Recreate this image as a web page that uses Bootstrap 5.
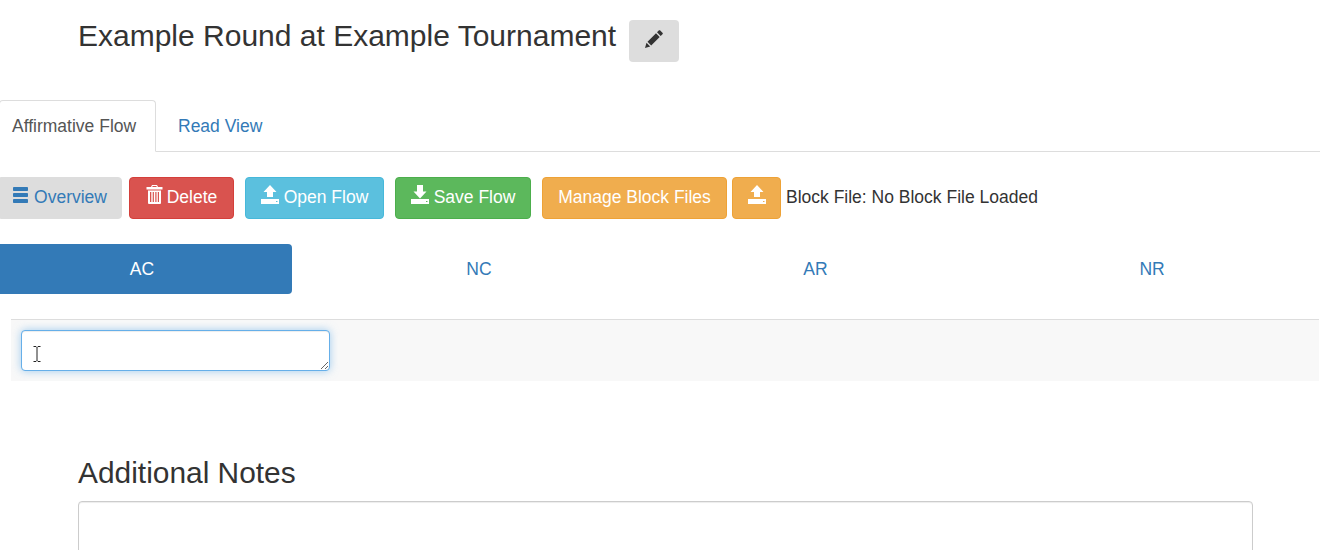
<!DOCTYPE html>
<html lang="en">
<head>
<meta charset="utf-8">
<title>Example Round at Example Tournament</title>
<link rel="stylesheet" href="https://cdn.jsdelivr.net/npm/bootstrap@5.3.0/dist/css/bootstrap.min.css">
<style>
html,body{height:550px;overflow:hidden}
body{font-family:"Liberation Sans",Arial,sans-serif;font-size:17.5px;color:#333;background:#fff;line-height:1.43}
.fl-head{padding:20px 0 0 78px;gap:13px;height:100px;align-items:flex-start}
.fl-title{font-size:30px;line-height:32px;margin:0;font-weight:400;color:#333}
.fl-edit{width:50px;height:42px;background:#ddd;border:0;border-radius:4px;padding:0 0 4px;display:flex;align-items:center;justify-content:center}
.fl-edit:hover{background:#ddd}
.fl-tabs{height:52px;border-bottom:1px solid #ddd;flex-wrap:nowrap}
.fl-tabs .nav-link{height:52px;width:auto;padding:0 20px 0 12px;line-height:50px;color:#337ab7;font-size:17.5px;border-radius:4px 4px 0 0;margin:0;border:1px solid transparent;white-space:nowrap}
.fl-tabs .first-tab{width:157px;margin-left:-1px;color:#555;background:#fff;border-color:#ddd #ddd #fff;padding-left:12px}
.fl-tabs .second-tab{padding-left:21px}
.fl-tools{padding-top:25px;height:92px;gap:11px;align-items:flex-start;white-space:nowrap}
.fl-btn{height:42px;font-size:17.5px;line-height:20px;padding:0 0 2px;border-radius:4px;color:#fff;display:flex;align-items:center;justify-content:center;gap:5px;border:1px solid transparent}
.fl-btn:hover{color:#fff}
.fl-btn svg{margin-bottom:5px}
.b-over{width:122px;margin-right:-4px;background:#ddd;border-color:#ddd;color:#337ab7;border-radius:0 4px 4px 0;padding-right:2px}
.b-over:hover{background:#ddd;color:#337ab7}
.b-over svg{margin-bottom:4px}
.b-del{width:105px;background:#d9534f;border-color:#d43f3a;gap:4px}
.b-del:hover{background:#d9534f}
.b-open{width:139px;background:#5bc0de;border-color:#46b8da}
.b-open:hover{background:#5bc0de}
.b-save{width:136px;background:#5cb85c;border-color:#4cae4c}
.b-save:hover{background:#5cb85c}
.b-man{width:185px;background:#f0ad4e;border-color:#eea236}
.b-man:hover{background:#f0ad4e}
.b-up{width:49px;background:#f0ad4e;border-color:#eea236;margin-left:-6px;margin-right:-6px}
.b-up:hover{background:#f0ad4e}
.fl-blocktext{line-height:40px;color:#333}
.fl-pills{display:grid;grid-template-columns:repeat(4,336.6px);margin-left:-26px;width:1346.4px;height:75px;align-items:start;flex-wrap:nowrap}
.fl-pills .nav-link{height:50px;line-height:50px;padding:0;text-align:center;color:#337ab7;font-size:17.5px;border-radius:4px}
.fl-pills .nav-link.active{margin:0 18.6px 0 18px;background:#337ab7;color:#fff}
.fl-panel{position:relative;margin-left:11px;margin-right:1px;height:62px;border-top:1px solid #ddd;background:#f8f8f8;padding:10px}
.fl-area{width:309px;height:41px;min-height:41px;display:block;border:1px solid #66afe9;border-radius:4px;box-shadow:inset 0 1px 1px rgba(0,0,0,.075),0 0 8px rgba(102,175,233,.6);padding:6px 12px;font-size:14px;outline:0}
.fl-area:focus{border-color:#66afe9;box-shadow:inset 0 1px 1px rgba(0,0,0,.075),0 0 8px rgba(102,175,233,.6)}
.fl-cursor{position:absolute;left:22px;top:26px;display:block}
.fl-notes{padding:76px 67px 0 78px}
.fl-notes h2{font-size:29.9px;line-height:31px;font-weight:400;margin:0 0 12px;color:#333;height:32px}
.fl-note-area{width:100%;height:120px;border:1px solid #ccc;border-radius:4px;box-shadow:inset 0 1px 1px rgba(0,0,0,.075);display:block}
svg{display:block;flex:none}
</style>
</head>
<body>
<div class="d-flex fl-head">
  <h1 class="fl-title">Example Round at Example Tournament</h1>
  <button type="button" class="btn fl-edit" aria-label="Edit">
    <svg width="18" height="18" viewBox="0 0 18 18" fill="#333"><path d="M0 18 1.500 12.800 5.200 16.500ZM2.500 11.800 11 3.300 14.700 7 6.200 15.500ZM12 2.300 14 .3Q14.500 0 15 .3L17.700 3Q18 3.500 17.700 4L15.700 6Z"/></svg>
  </button>
</div>
<ul class="nav nav-tabs fl-tabs">
  <li class="nav-item"><a class="nav-link first-tab" href="#">Affirmative Flow</a></li>
  <li class="nav-item"><a class="nav-link second-tab" href="#">Read View</a></li>
</ul>
<div class="d-flex fl-tools">
  <button type="button" class="btn fl-btn b-over">
    <svg width="16" height="16" viewBox="0 0 16 16" fill="#337ab7"><rect x="0" y="0" width="15" height="4" rx=".8"/><rect x="0" y="6" width="15" height="4" rx=".8"/><rect x="0" y="12" width="15" height="4" rx=".8"/></svg>Overview
  </button>
  <button type="button" class="btn fl-btn b-del">
    <svg width="17" height="20" viewBox="0 0 17 20" fill="#fff"><path d="M6 0h5l1 2H16.500v2.500H.5V2h4.500ZM6.700 1l-.5 1h4.600l-.5-1ZM2 5.500h13V18a1 1 0 0 1-1 1H3a1 1 0 0 1-1-1ZM4 7v10h1.300V7ZM6.700 7v10h1.200V7ZM9.300 7v10h1.200V7ZM11.800 7v10H13V7Z" fill-rule="evenodd"/></svg>Delete
  </button>
  <button type="button" class="btn fl-btn b-open">
    <svg width="18" height="19" viewBox="0 0 18 19" fill="#fff"><path d="M9 0 15.500 7H12V12H6V7H2.500ZM0 14H18V19H0ZM15 16v1h1.500v-1Z" fill-rule="evenodd"/></svg>Open Flow
  </button>
  <button type="button" class="btn fl-btn b-save">
    <svg width="18" height="19" viewBox="0 0 18 19" fill="#fff"><path d="M6 0H12V6.500H15.500L9 13.500 2.500 6.500H6ZM0 14H18V19H0ZM15 16v1h1.500v-1Z" fill-rule="evenodd"/></svg>Save Flow
  </button>
  <button type="button" class="btn fl-btn b-man">Manage Block Files</button>
  <button type="button" class="btn fl-btn b-up">
    <svg width="18" height="19" viewBox="0 0 18 19" fill="#fff"><path d="M9 0 15.500 7H12V12H6V7H2.500ZM0 14H18V19H0ZM15 16v1h1.500v-1Z" fill-rule="evenodd"/></svg>
  </button>
  <span class="fl-blocktext">Block File: No Block File Loaded</span>
</div>
<ul class="nav nav-pills fl-pills">
  <li class="nav-item"><a class="nav-link active" href="#">AC</a></li>
  <li class="nav-item"><a class="nav-link" href="#">NC</a></li>
  <li class="nav-item"><a class="nav-link" href="#">AR</a></li>
  <li class="nav-item"><a class="nav-link" href="#">NR</a></li>
</ul>
<div class="fl-panel">
  <textarea class="form-control fl-area" aria-label="Flow cell"></textarea>
  <svg class="fl-cursor" width="8" height="16" viewBox="0 0 8 16" fill="none" stroke="#222" stroke-width="1"><path d="M.5.500h2.500l1 1 1-1h2.500M4 1.500v13M.5 15.500h2.500l1-1 1 1h2.500"/></svg>
</div>
<div class="fl-notes">
  <h2>Additional Notes</h2>
  <textarea class="form-control fl-note-area" aria-label="Additional notes"></textarea>
</div>
<script src="https://cdn.jsdelivr.net/npm/bootstrap@5.3.0/dist/js/bootstrap.bundle.min.js"></script>
</body>
</html>
